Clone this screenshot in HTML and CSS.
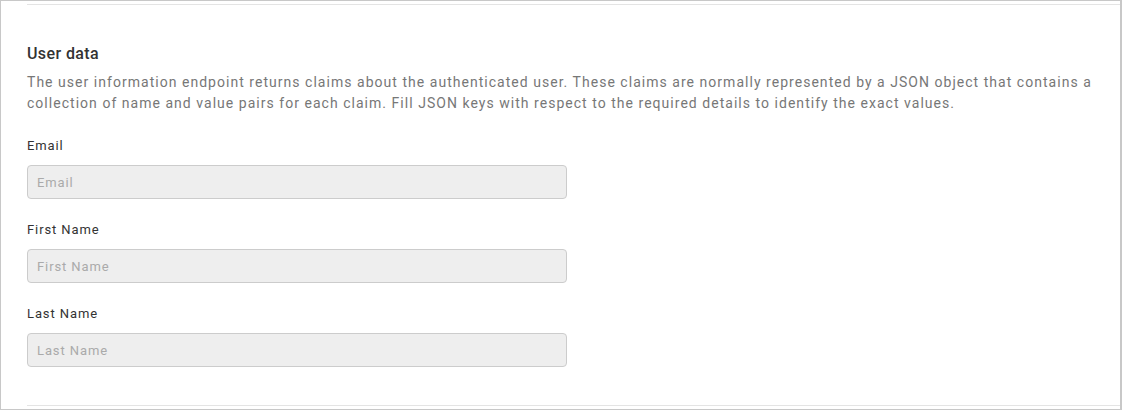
FILE: index.html
```html
<!DOCTYPE html>
<html>
<head>
<meta charset="utf-8">
<link rel="stylesheet" href="styles.css">
</head>
<body>
<div class="frame">
  <div class="section">
    <h3 class="title">User data</h3>
    <p class="desc">The user information endpoint returns claims about the authenticated user. These claims are normally represented by a JSON object that contains a collection of name and value pairs for each claim. Fill JSON keys with respect to the required details to identify the exact values.</p>
    <div class="field">
      <label class="label">Email</label>
      <input class="input" type="text" placeholder="Email" disabled>
    </div>
    <div class="field">
      <label class="label">First Name</label>
      <input class="input" type="text" placeholder="First Name" disabled>
    </div>
    <div class="field">
      <label class="label">Last Name</label>
      <input class="input" type="text" placeholder="Last Name" disabled>
    </div>
  </div>
</div>
</body>
</html>
```
FILE: styles.css
```css
html, body {
  margin: 0;
  padding: 0;
  background: #fff;
}
.frame {
  width: 1122px;
  height: 410px;
  box-sizing: border-box;
  border: 1px solid #c8c8c8;
  border-right-width: 2px;
  padding: 3px 0 3px 26px;
  font-family: Roboto, "Liberation Sans", sans-serif;
}
.section {
  border-top: 1px solid #e4e4e4;
  border-bottom: 1px solid #e4e4e4;
  height: 402px;
  box-sizing: border-box;
  padding-top: 39px;
}
.title {
  margin: 0;
  font-size: 16px;
  font-weight: 500;
  line-height: 20px;
  color: #333;
  letter-spacing: 0.4px;
}
.desc {
  margin: 8px 0 0;
  font-size: 14px;
  line-height: 21px;
  color: #777;
  letter-spacing: 1.03px;
  padding-right: 20px;
}
.field {
  display: flex;
  flex-direction: column;
  margin-top: 24px;
}
.field + .field {
  margin-top: 23px;
}
.label {
  font-size: 13px;
  line-height: 16px;
  color: #333;
  letter-spacing: 0.9px;
}
.input {
  margin-top: 11px;
  width: 540px;
  height: 34px;
  box-sizing: border-box;
  border: 1px solid #ccc;
  border-radius: 4px;
  background: #eee;
  padding: 0 9px;
  font-family: Roboto, "Liberation Sans", sans-serif;
  font-size: 13px;
  letter-spacing: 0.9px;
  color: #555;
}
.input::placeholder {
  color: #aaa;
}
```
